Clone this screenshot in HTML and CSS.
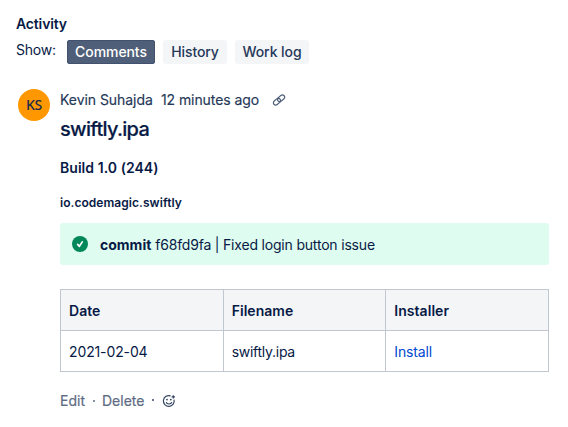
FILE: index.html
```html
<!DOCTYPE html>
<html lang="en">
<head>
<meta charset="utf-8">
<title>Activity</title>
<link rel="stylesheet" href="styles.css">
</head>
<body>
<main class="activity">
  <h2 class="heading">Activity</h2>
  <nav class="filters">
    <span class="show">Show:</span>
    <button class="tab tab-active">Comments</button>
    <button class="tab tab-history">History</button>
    <button class="tab tab-log">Work log</button>
  </nav>
  <article class="comment">
    <div class="avatar">KS</div>
    <div class="body">
      <header class="meta">
        <span class="author">Kevin Suhajda</span>
        <span class="time">12 minutes ago</span>
        <svg class="link-icon" viewBox="0 0 14 14"><g transform="rotate(-40 7 7)"><rect x="0.4" y="4.7" width="7.9" height="4.6" rx="2.3"/><rect x="5.7" y="4.7" width="7.9" height="4.6" rx="2.3"/></g></svg>
      </header>
      <h1 class="title">swiftly.ipa</h1>
      <h3 class="build">Build 1.0 (244)</h3>
      <h4 class="bundle">io.codemagic.swiftly</h4>
      <div class="panel">
        <svg class="check" viewBox="0 0 16 16"><circle cx="8" cy="8" r="8"/><path d="M5.6 8.4l1.8 1.9 2.9-4.4"/></svg>
        <p class="message"><strong>commit</strong> <span class="commit-text">f68fd9fa | Fixed login button issue</span></p>
      </div>
      <table class="files">
        <thead><tr><th>Date</th><th>Filename</th><th>Installer</th></tr></thead>
        <tbody><tr><td class="date">2021-02-04</td><td class="name">swiftly.ipa</td><td><a class="install">Install</a></td></tr></tbody>
      </table>
      <footer class="actions">
        <span class="edit">Edit</span><i class="dot"></i><span class="delete">Delete</span><i class="dot dot-dark"></i>
        <svg class="react" viewBox="0 0 14 14"><path d="M8.6 1.9A5.4 5.4 0 1 0 12 5.6"/><path d="M4.2 8.2c.7 2.4 4.9 2.4 5.6 0M11.3 1.2v3.4M9.6 2.9h3.4"/><circle class="eye" cx="5" cy="5.6" r=".9"/><circle class="eye" cx="8.8" cy="5.6" r=".9"/></svg>
      </footer>
    </div>
  </article>
</main>
</body>
</html>
```
FILE: styles.css
```css
* { box-sizing: border-box; }
body { margin: 0; background: #fff; font: 14px/20px Inter, "Liberation Sans", sans-serif; white-space: nowrap; }
h1, h2, h3, h4, p { margin: 0; }
.activity { padding: 14px 19px 0 16px; color: #071a45; }
.heading { font-size: 14px; line-height: 20px; font-weight: 600; letter-spacing: -0.15px; }
.filters { display: flex; margin-top: 5px; height: 25px; align-items: center; }
.show { width: 51px; margin-top: -3px; letter-spacing: -0.2px; }
.tab { height: 24px; padding: 0; border: 0; border-radius: 3px; background: #f4f5f7; color: #253858; font: 500 14px/24px Inter, sans-serif; letter-spacing: -0.08px; margin-right: 8px; width: 64px; }
.tab-active { width: 88px; background: #505f79; color: #fff; box-shadow: inset 0 0 0 1px #42526e; }
.tab-log { width: 74px; }
.comment { display: flex; margin-top: 25px; }
.avatar { width: 32px; height: 32px; margin-left: 2px; border-radius: 50%; background: #ff9800; color: #172b4d; font: 500 14px/32px "Noto Sans", sans-serif; text-align: center; letter-spacing: -0.3px; }
.body { width: 489px; margin-left: 10px; }
.meta { display: flex; align-items: center; height: 22px; color: #253858; -webkit-text-stroke: 0.15px; }
.author { width: 101px; letter-spacing: -0.05px; }
.time { width: 111px; letter-spacing: -0.08px; }
.link-icon { width: 14px; height: 14px; fill: none; stroke: #505f79; stroke-width: 1.2; }
.title { margin-top: 6px; font-size: 20px; line-height: 24px; font-weight: 500; letter-spacing: -0.72px; -webkit-text-stroke: 0.2px; }
.build { margin-top: 17px; font-size: 14px; line-height: 20px; font-weight: 600; letter-spacing: 0.05px; }
.bundle { margin-top: 17px; font-size: 12px; line-height: 16px; font-weight: 600; letter-spacing: 0.05px; }
.panel { display: flex; align-items: center; height: 42px; margin-top: 12px; padding-left: 12px; border-radius: 3px; background: #dffcf0; }
.check { width: 16px; height: 16px; margin-right: 12px; fill: #00875a; }
.check path { fill: none; stroke: #fff; stroke-width: 1.7; stroke-linecap: round; stroke-linejoin: round; }
.message { padding-top: 1px; }
.commit-text { letter-spacing: -0.19px; }
.files { width: 489px; margin-top: 24px; border-collapse: collapse; table-layout: fixed; }
.files th, .files td { height: 41px; padding: 1px 8px 0; border: 1px solid #c1c7d0; text-align: left; }
.files th { background: #f4f5f7; font-weight: 600; letter-spacing: 0.04px; }
.files .date { letter-spacing: -0.12px; }
.files .name { letter-spacing: -0.27px; }
.install { color: #0049d0; letter-spacing: -0.15px; }
.actions { display: flex; align-items: center; height: 20px; margin-top: 19px; color: #5e6c84; -webkit-text-stroke: 0.2px; }
.edit { width: 33px; }
.dot { width: 2px; height: 2px; margin-right: 7px; border-radius: 1px; background: #5e6c84; }
.delete { width: 50px; }
.dot-dark { background: #344563; margin: -2px 8px 0 0; }
.react { width: 14px; height: 14px; margin-top: -1px; fill: none; stroke: #344563; stroke-width: 1.2; }
.eye { fill: #344563; stroke: none; }
```
